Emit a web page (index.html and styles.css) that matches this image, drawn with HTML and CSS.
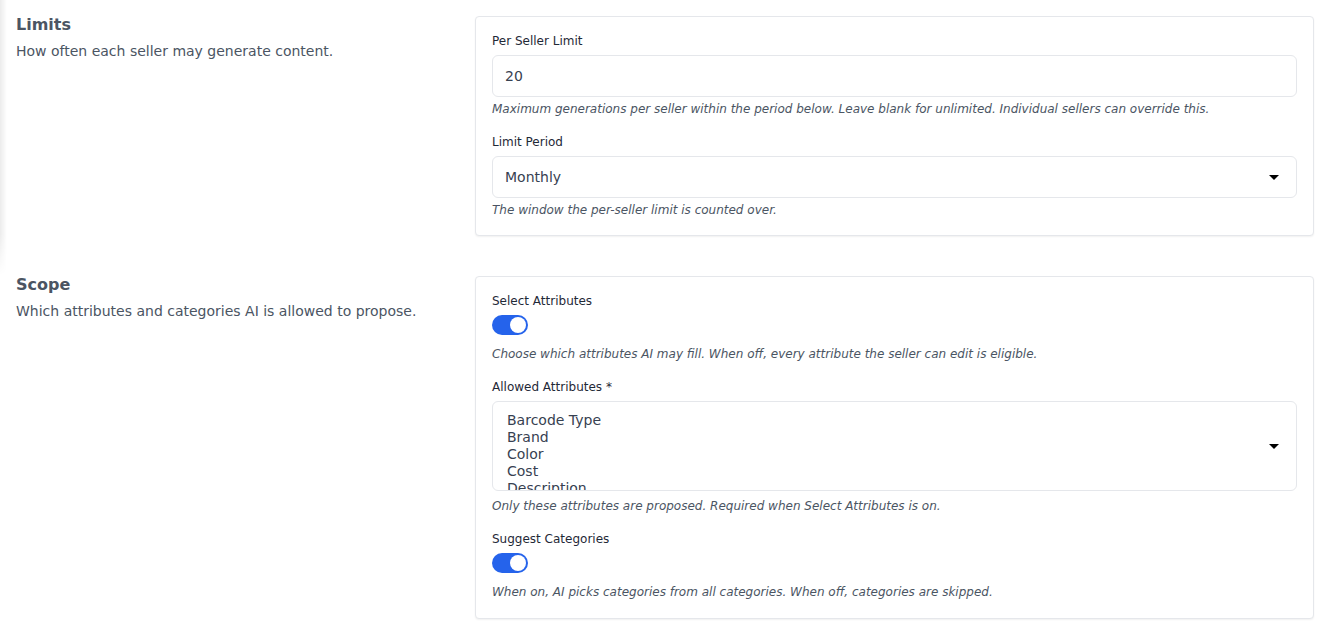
FILE: index.html
```html
<!DOCTYPE html>
<html lang="en">
<head>
<meta charset="utf-8">
<title>AI Settings</title>
<link rel="stylesheet" href="styles.css">
</head>
<body>
<div class="edge-shadow"></div>
<main class="page">
  <section class="section">
    <div class="section-info">
      <h2 class="section-title">Limits</h2>
      <p class="section-desc">How often each seller may generate content.</p>
    </div>
    <div class="card">
      <div class="field">
        <label class="label">Per Seller Limit</label>
        <div class="input">20</div>
        <p class="hint">Maximum generations per seller within the period below. Leave blank for unlimited. Individual sellers can override this.</p>
      </div>
      <div class="field">
        <label class="label">Limit Period</label>
        <div class="input select">
          <span>Monthly</span>
          <span class="caret"></span>
        </div>
        <p class="hint">The window the per-seller limit is counted over.</p>
      </div>
    </div>
  </section>

  <section class="section">
    <div class="section-info">
      <h2 class="section-title">Scope</h2>
      <p class="section-desc">Which attributes and categories AI is allowed to propose.</p>
    </div>
    <div class="card card-scope">
      <div class="field">
        <label class="label">Select Attributes</label>
        <div class="toggle on"><span class="knob"></span></div>
        <p class="hint">Choose which attributes AI may fill. When off, every attribute the seller can edit is eligible.</p>
      </div>
      <div class="field">
        <label class="label">Allowed Attributes *</label>
        <div class="multi">
          <ul class="options">
            <li>Barcode Type</li>
            <li>Brand</li>
            <li>Color</li>
            <li>Cost</li>
            <li>Description</li>
          </ul>
          <span class="caret"></span>
        </div>
        <p class="hint hint-after-multi">Only these attributes are proposed. Required when Select Attributes is on.</p>
      </div>
      <div class="field">
        <label class="label">Suggest Categories</label>
        <div class="toggle on"><span class="knob"></span></div>
        <p class="hint">When on, AI picks categories from all categories. When off, categories are skipped.</p>
      </div>
    </div>
  </section>
</main>
</body>
</html>
```

FILE: styles.css
```css
* { box-sizing: border-box; }

html, body {
  margin: 0;
  padding: 0;
  background: #ffffff;
}

body {
  font-family: "DejaVu Sans", "Liberation Sans", sans-serif;
  color: #1f2937;
}

.edge-shadow {
  position: fixed;
  left: 0;
  top: 0;
  width: 7px;
  height: 275px;
  background: linear-gradient(to right, rgba(0,0,0,0.075), rgba(0,0,0,0));
  -webkit-mask-image: linear-gradient(to bottom, #000 85%, transparent 100%);
  mask-image: linear-gradient(to bottom, #000 85%, transparent 100%);
  pointer-events: none;
}

.page {
  padding: 16px 16px 16px 16px;
  display: flex;
  flex-direction: column;
  gap: 40px;
}

.section {
  display: grid;
  grid-template-columns: 443px 1fr;
  column-gap: 16px;
  align-items: start;
}

.section-title {
  margin: 0;
  font-size: 16px;
  line-height: 17px;
  font-weight: 700;
  color: #4b5563;
}

.section-desc {
  margin: 9px 0 0 0;
  font-size: 14px;
  line-height: 18px;
  color: #4b5563;
}

.card {
  border: 1px solid #e5e7eb;
  border-radius: 4px;
  background: #fff;
  box-shadow: 0 1px 2px rgba(0,0,0,0.06);
  padding: 16px 16px 17px 16px;
  display: flex;
  flex-direction: column;
  gap: 17px;
}

.card-scope {
  padding-bottom: 18px;
}

.field {
  display: flex;
  flex-direction: column;
}

.label {
  display: block;
  font-size: 12px;
  line-height: 16px;
  color: #1f2937;
  margin-bottom: 6px;
}

.input {
  height: 42px;
  border: 1px solid #e5e7eb;
  border-radius: 6px;
  padding: 0 12px;
  display: flex;
  align-items: center;
  font-size: 14px;
  color: #374151;
  background: #fff;
}

.select {
  justify-content: space-between;
  padding-right: 17px;
}

.caret {
  width: 0;
  height: 0;
  border-left: 5px solid transparent;
  border-right: 5px solid transparent;
  border-top: 5px solid #000;
  flex: none;
}

.hint {
  margin: 4px 0 0 0;
  font-size: 12px;
  line-height: 16px;
  font-style: italic;
  color: #4b5563;
}

.hint-after-multi {
  margin-top: 7px;
}

.toggle {
  width: 36px;
  height: 20px;
  border-radius: 10px;
  background: #d1d5db;
  display: flex;
  align-items: center;
  padding: 0 2px;
  margin-bottom: 7px;
}

.toggle.on {
  background: #2563eb;
  justify-content: flex-end;
}

.knob {
  width: 16px;
  height: 16px;
  border-radius: 50%;
  background: #fff;
}

.multi {
  height: 90px;
  border: 1px solid #e5e7eb;
  border-radius: 6px;
  display: flex;
  align-items: center;
  justify-content: space-between;
  padding: 0 17px 0 14px;
  overflow: hidden;
  background: #fff;
}

.options {
  list-style: none;
  margin: 0;
  padding: 10px 0 0 0;
  align-self: flex-start;
  height: 88px;
  overflow: hidden;
  font-size: 14px;
  line-height: 17px;
  color: #374151;
}
```
